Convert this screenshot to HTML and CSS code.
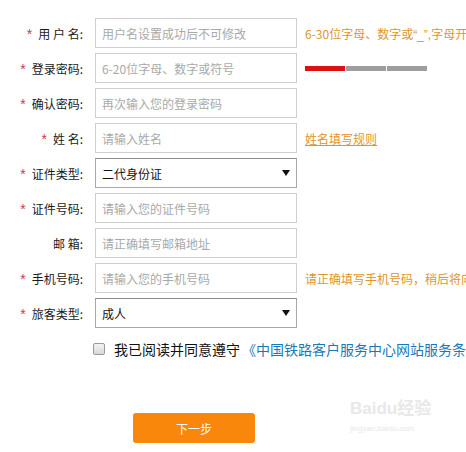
FILE: index.html
```html
<!DOCTYPE html>
<html lang="zh-CN">
<head>
<meta charset="utf-8">
<title>注册</title>
<link rel="stylesheet" href="styles.css">
</head>
<body>
<form class="reg">
  <div class="row">
    <label class="lbl"><span class="req">*</span>用&nbsp;户&nbsp;名:</label>
    <div class="field ph">用户名设置成功后不可修改</div>
    <div class="hint">6-30位字母、数字或<span class="latin">“_”,</span>字母开头</div>
  </div>
  <div class="row">
    <label class="lbl"><span class="req">*</span>登录密码:</label>
    <div class="field ph">6-20位字母、数字或符号</div>
    <div class="strength"><span class="seg red"></span><span class="seg"></span><span class="seg"></span></div>
  </div>
  <div class="row">
    <label class="lbl"><span class="req">*</span>确认密码:</label>
    <div class="field ph">再次输入您的登录密码</div>
  </div>
  <div class="row">
    <label class="lbl"><span class="req">*</span>姓&nbsp;名:</label>
    <div class="field ph">请输入姓名</div>
    <a class="hint link">姓名填写规则</a>
  </div>
  <div class="row">
    <label class="lbl"><span class="req">*</span>证件类型:</label>
    <div class="field select"><span>二代身份证</span><svg width="8" height="6" viewBox="0 0 8 6"><path d="M0 0H8L4 6Z" fill="#111"/></svg></div>
  </div>
  <div class="row">
    <label class="lbl"><span class="req">*</span>证件号码:</label>
    <div class="field ph">请输入您的证件号码</div>
  </div>
  <div class="row">
    <label class="lbl">邮&nbsp;箱:</label>
    <div class="field ph">请正确填写邮箱地址</div>
  </div>
  <div class="row">
    <label class="lbl"><span class="req">*</span>手机号码:</label>
    <div class="field ph">请输入您的手机号码</div>
    <div class="hint">请正确填写手机号码，稍后将向该手机号码发送短信验证码</div>
  </div>
  <div class="row">
    <label class="lbl"><span class="req">*</span>旅客类型:</label>
    <div class="field select"><span>成人</span><svg width="8" height="6" viewBox="0 0 8 6"><path d="M0 0H8L4 6Z" fill="#111"/></svg></div>
  </div>
  <div class="agree">
    <span class="box"></span>
    <span class="agree-text">我已阅读并同意遵守</span>
    <a class="agree-link">《中国铁路客户服务中心网站服务条款》</a>
  </div>
  <div class="actions">
    <button type="button" class="next">下一步</button>
  </div>
  <div class="watermark"><span class="wm-big">Bai<span class="wm-du">du</span>经验</span><span class="wm-small">jingyan.baidu.com</span></div>
</form>
</body>
</html>
```
FILE: styles.css
```css
html, body {
  margin: 0;
  padding: 0;
  background: #fff;
  overflow: hidden;
  width: 466px;
  height: 452px;
}
body {
  font-family: "Microsoft YaHei", "Noto Sans CJK SC", sans-serif;
  font-size: 12px;
  color: #333;
}
.reg {
  position: relative;
  padding-top: 18px;
  display: flex;
  flex-direction: column;
  gap: 5px;
  overflow: hidden;
  width: 466px;
}
.row {
  display: flex;
  align-items: center;
  height: 30px;
  white-space: nowrap;
  overflow: hidden;
}
.lbl {
  width: 83px;
  padding-right: 12px;
  text-align: right;
  font-size: 12px;
  color: #1a1a1a;
  flex: none;
}
.req {
  color: #d0335a;
  margin-right: 6px;
  font-family: "Liberation Sans", sans-serif;
  font-size: 14px;
}
.field {
  flex: none;
  display: flex;
  align-items: center;
  padding: 0 6px;
  box-sizing: border-box;
  width: 202px;
  height: 30px;
  border: 1px solid #cfcfcf;
}
.ph {
  color: #a9a9a9;
}
.select {
  border-color: #a8a8a8;
  border-top-color: #8c8c8c;
  color: #111;
  justify-content: space-between;
}
.hint {
  margin-left: 8px;
  color: #e0962a;
  white-space: nowrap;
}
.latin {
  font-family: "Liberation Sans", sans-serif;
}
.link {
  text-decoration: underline;
  color: #e0962a;
}
.strength {
  margin-left: 8px;
  display: flex;
  gap: 1px;
}
.seg {
  width: 40px;
  height: 5px;
  background: #9e9e9e;
}
.seg.red {
  background: #dd1111;
}
.agree {
  display: flex;
  align-items: center;
  margin-top: 5px;
  padding-left: 93px;
  height: 22px;
  font-size: 14px;
  white-space: nowrap;
  overflow: hidden;
}
.box {
  width: 10px;
  height: 10px;
  border: 1px solid #9a9a9a;
  border-radius: 2px;
  background: linear-gradient(#f4f4f4, #d8d8d8);
  margin-right: 9px;
  flex: none;
}
.agree-text {
  color: #111;
}
.agree-link {
  color: #1a78b8;
  margin-left: 2px;
}
.actions {
  margin-top: 48px;
  padding-left: 133px;
}
.next {
  width: 122px;
  height: 30px;
  border: none;
  border-radius: 3px;
  background: #f8870c;
  color: #fff;
  font-family: "Microsoft YaHei", "Noto Sans CJK SC", sans-serif;
  font-size: 12px;
  padding: 0;
}
.watermark {
  position: absolute;
  left: 350px;
  top: 400px;
  display: flex;
  flex-direction: column;
  color: #e8e8e8;
  line-height: 1;
}
.wm-big {
  font-family: "Liberation Sans", "Noto Sans CJK SC", sans-serif;
  font-size: 17px;
  font-weight: bold;
}
.wm-small {
  font-family: "Liberation Sans", sans-serif;
  font-size: 8px;
  margin-top: 8px;
}
```
